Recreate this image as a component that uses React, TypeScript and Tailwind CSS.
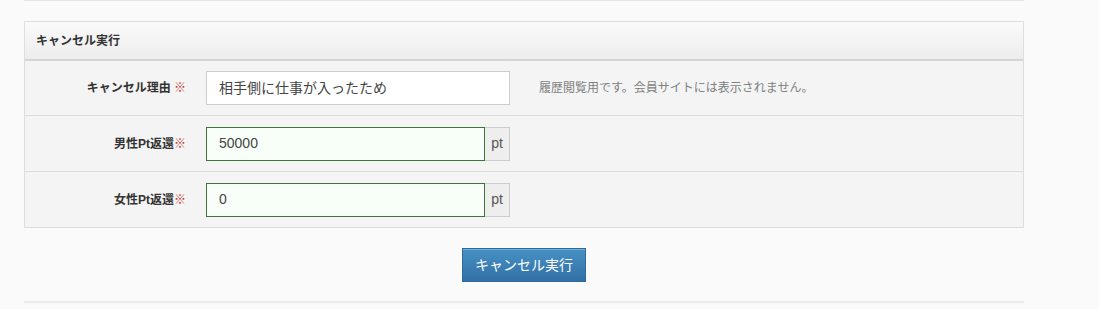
export default function App() {
  const font = { fontFamily: '"Liberation Sans", "Noto Sans CJK JP", sans-serif' };
  return (
    <main className="bg-[#fafafa] min-h-screen w-[1099px] h-[309px]" style={font}>
      <div className="w-[1000px] ml-[24px]">
        <div className="border-t border-[#e6e6e6]" />

        {/* キャンセル実行パネル */}
        <div className="mt-[20px] border border-[#dedede] bg-[#f4f4f4]">
          <div className="h-[39px] flex items-center px-[11px] bg-gradient-to-b from-[#fafafa] to-[#ededed] border-b-2 border-[#d4d4d4]">
            <span className="text-[12px] font-bold text-[#333]">キャンセル実行</span>
          </div>

          <div className="flex items-center h-[55px] border-b border-[#dcdcdc]">
            <div className="w-[171px] pr-[10px] text-right text-[12px] font-bold text-[#333]">
              キャンセル理由 <span className="text-[#c0392b] font-normal">※</span>
            </div>
            <div className="ml-[10px] w-[304px] h-[34px] bg-white border border-[#cccccc] flex items-center px-[12px] text-[14px] text-[#444]">
              相手側に仕事が入ったため
            </div>
            <div className="ml-[29px] text-[12px] text-[#808080]">
              履歴閲覧用です。会員サイトには表示されません。
            </div>
          </div>

          <div className="flex items-center h-[56px] border-b border-[#dcdcdc]">
            <div className="w-[171px] pr-[10px] text-right text-[12px] font-bold text-[#333]">
              男性Pt返還<span className="text-[#c0392b] font-normal">※</span>
            </div>
            <div className="ml-[10px] flex">
              <div className="w-[279px] h-[34px] bg-[#f8fff8] border border-[#3c763d] flex items-center px-[12px] text-[14px] text-[#444]">
                50000
              </div>
              <div className="w-[25px] h-[34px] bg-[#eeeeee] border border-l-0 border-[#cccccc] flex items-center justify-center text-[14px] text-[#555]">
                pt
              </div>
            </div>
          </div>

          <div className="flex items-center h-[55px]">
            <div className="w-[171px] pr-[10px] text-right text-[12px] font-bold text-[#333]">
              女性Pt返還<span className="text-[#c0392b] font-normal">※</span>
            </div>
            <div className="ml-[10px] flex">
              <div className="w-[279px] h-[34px] bg-[#f8fff8] border border-[#3c763d] flex items-center px-[12px] text-[14px] text-[#444]">
                0
              </div>
              <div className="w-[25px] h-[34px] bg-[#eeeeee] border border-l-0 border-[#cccccc] flex items-center justify-center text-[14px] text-[#555]">
                pt
              </div>
            </div>
          </div>
        </div>

        <div className="flex justify-center pt-[20px] pb-[19px] border-b-2 border-[#ebebeb]">
          <button className="w-[124px] h-[34px] text-[14px] text-white bg-gradient-to-b from-[#4791c4] to-[#3270a6] border border-[#2f6a9c] shadow-[inset_0_1px_0_rgba(255,255,255,0.25)]">
            キャンセル実行
          </button>
        </div>
      </div>
    </main>
  );
}
